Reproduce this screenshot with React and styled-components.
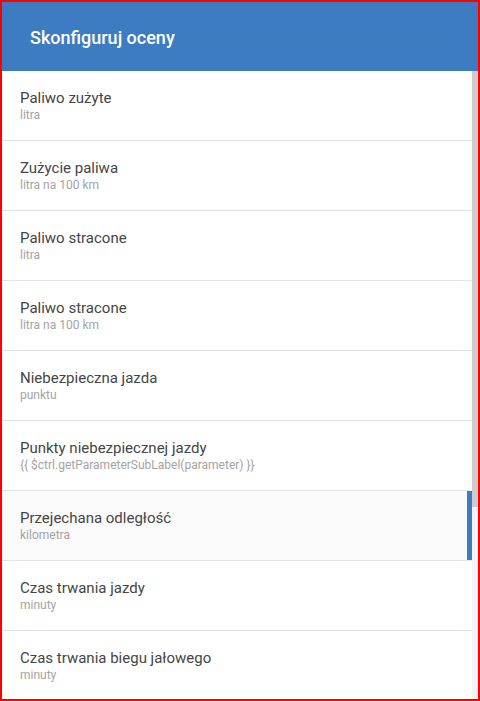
import styled, { createGlobalStyle } from "styled-components";

const GlobalStyle = createGlobalStyle`
  html, body {
    margin: 0;
    padding: 0;
    background: #ffffff;
  }
  body {
    font-family: Roboto, "Liberation Sans", Arial, sans-serif;
  }
`;

const parameters = [
  { label: "Paliwo zużyte", sub: "litra" },
  { label: "Zużycie paliwa", sub: "litra na 100 km" },
  { label: "Paliwo stracone", sub: "litra" },
  { label: "Paliwo stracone", sub: "litra na 100 km" },
  { label: "Niebezpieczna jazda", sub: "punktu" },
  {
    label: "Punkty niebezpiecznej jazdy",
    sub: "{{ $ctrl.getParameterSubLabel(parameter) }}",
  },
  { label: "Przejechana odległość", sub: "kilometra", active: true },
  { label: "Czas trwania jazdy", sub: "minuty" },
  { label: "Czas trwania biegu jałowego", sub: "minuty" },
];

// visible list height / total content height
const thumbRatio = 0.695;

export default function App() {
  return (
    <>
      <GlobalStyle />
      <Frame>
        <Header>
          <Title>Skonfiguruj oceny</Title>
        </Header>
        <Body>
          <List>
            {parameters.map((p, i) => (
              <Row key={i} $active={p.active}>
                <Label>{p.label}</Label>
                <SubLabel>{p.sub}</SubLabel>
              </Row>
            ))}
          </List>
          <ScrollRail>
            <Thumb style={{ height: `${thumbRatio * 100}%` }} />
          </ScrollRail>
        </Body>
      </Frame>
    </>
  );
}

const Frame = styled.div`
  width: 480px;
  height: 701px;
  box-sizing: border-box;
  border: 2px solid #ff0000;
  display: flex;
  flex-direction: column;
  overflow: hidden;
`;

const Header = styled.div`
  height: 69px;
  flex-shrink: 0;
  background-color: #3d7cc0;
  display: flex;
  align-items: center;
  padding: 0 28px;
`;

const Title = styled.div`
  color: #ffffff;
  font-size: 18px;
  font-weight: 500;
  padding-top: 1px;
`;

const Body = styled.div`
  flex: 1;
  min-height: 0;
  display: flex;
`;

const List = styled.div`
  flex: 1;
  min-width: 0;
  overflow: hidden;
`;

const ScrollRail = styled.div`
  width: 6px;
  flex-shrink: 0;
  background-color: #f4f4f4;
`;

const Thumb = styled.div`
  width: 100%;
  background-color: #cdcdcd;
`;

const Row = styled.div`
  height: 70px;
  box-sizing: border-box;
  border-bottom: 1px solid #e3e3e3;
  display: flex;
  flex-direction: column;
  justify-content: center;
  padding: 0 18px;
  background-color: ${(p) => (p.$active ? "#fafafa" : "#ffffff")};
  box-shadow: ${(p) => (p.$active ? "inset -5px 0 0 #3d7cc0" : "none")};
`;

const Label = styled.div`
  font-size: 15px;
  line-height: 20px;
  color: #454545;
`;

const SubLabel = styled.div`
  font-size: 12px;
  line-height: 16px;
  color: #a4a4a4;
  margin-top: -1px;
`;
